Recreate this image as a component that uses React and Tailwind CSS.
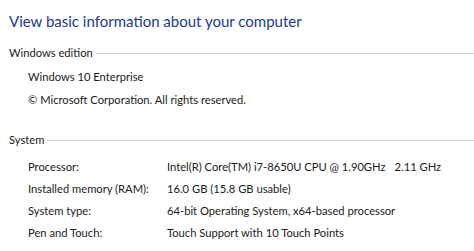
export default function App() {
  const rows = [
    ["Processor:", <><span>Intel(R) Core(TM) i7-8650U CPU @ 1.90GHz</span><span className="ml-[9px]">2.11 GHz</span></>],
    ["Installed memory (RAM):", "16.0 GB (15.8 GB usable)"],
    ["System type:", "64-bit Operating System, x64-based processor"],
    ["Pen and Touch:", "Touch Support with 10 Touch Points"],
  ];
  return (
    <div className="w-[474px] h-[251px] bg-white overflow-hidden text-[#1a1a1a]" style={{ fontFamily: 'Lato, "Noto Sans", sans-serif' }}>
      <div className="pl-[9px] pt-[10px] text-[15px] leading-[22px] text-[#213a8c]">View basic information about your computer</div>
      <div className="flex items-center pl-[9px] mt-[13px] h-[16px] text-[11.2px]">
        <span>Windows edition</span>
        <div className="flex-1 ml-[3px] h-px bg-[#d4d4d4]" />
      </div>
      <div className="pl-[28px] text-[11.2px] mt-[4px] leading-[23px]">
        <div>Windows 10 Enterprise</div>
        <div>© Microsoft Corporation. All rights reserved.</div>
      </div>
      <div className="flex items-center pl-[9px] mt-[21px] h-[16px] text-[11.2px]">
        <span>System</span>
        <div className="flex-1 ml-[3px] h-px bg-[#d4d4d4]" />
      </div>
      <div className="pl-[28px] text-[11.2px] mt-[8px]">
        {rows.map(([k, v]) => (
          <div key={k} className="flex h-[22px] items-center">
            <div className="w-[139px] shrink-0">{k}</div>
            <div className="whitespace-nowrap">{v}</div>
          </div>
        ))}
      </div>
    </div>
  );
}
